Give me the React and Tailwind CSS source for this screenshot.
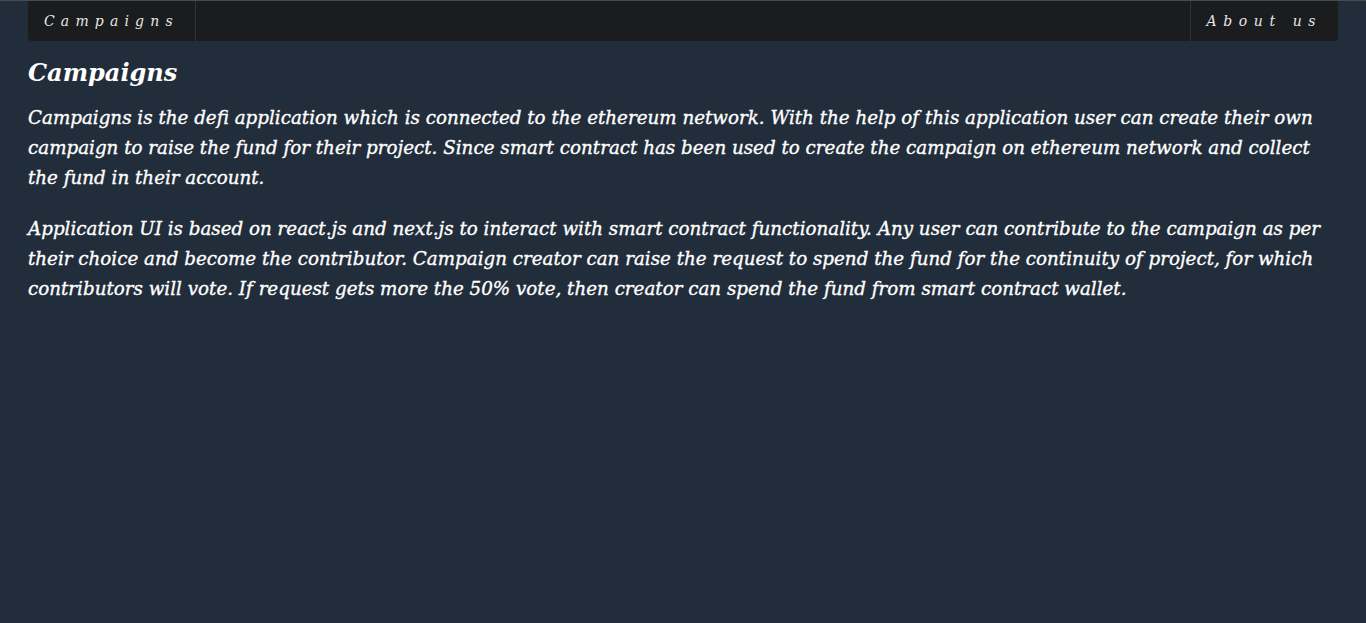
export default function App() {
  return (
    <div className="min-h-screen bg-[#222d3b] border-t border-[#4a4a4a] px-[28px] font-['DejaVu_Serif',serif] italic text-white">
      <nav className="flex h-[40px] items-stretch justify-between rounded-b-[4px] bg-[#1b1c1d]">
        <a className="flex items-center border-r border-white/10 px-[16px] text-[14px] tracking-[0.44em] text-[#e6e6e6]">
          Campaigns
        </a>
        <a className="flex items-center border-l border-white/10 px-[16px] text-[14px] tracking-[0.47em] text-[#e6e6e6]">
          About us
        </a>
      </nav>
      <h1 className="mt-[14px] text-[24px] font-bold leading-[36px]">Campaigns</h1>
      <p className="mt-[12px] text-[18.3px] leading-[30px] [-webkit-text-stroke:0.35px_white]">
        Campaigns is the defi application which is connected to the ethereum network. With the help of this application user can create their own campaign to raise the fund for their project. Since smart contract has been used to create the campaign on ethereum network and collect the fund in their account.
      </p>
      <p className="mt-[21px] text-[18.3px] leading-[30px] [-webkit-text-stroke:0.35px_white]">
        Application UI is based on react.js and next.js to interact with smart contract functionality. Any user can contribute to the campaign as per their choice and become the contributor. Campaign creator can raise the request to spend the fund for the continuity of project, for which contributors will vote. If request gets more the 50% vote, then creator can spend the fund from smart contract wallet.
      </p>
    </div>
  );
}
